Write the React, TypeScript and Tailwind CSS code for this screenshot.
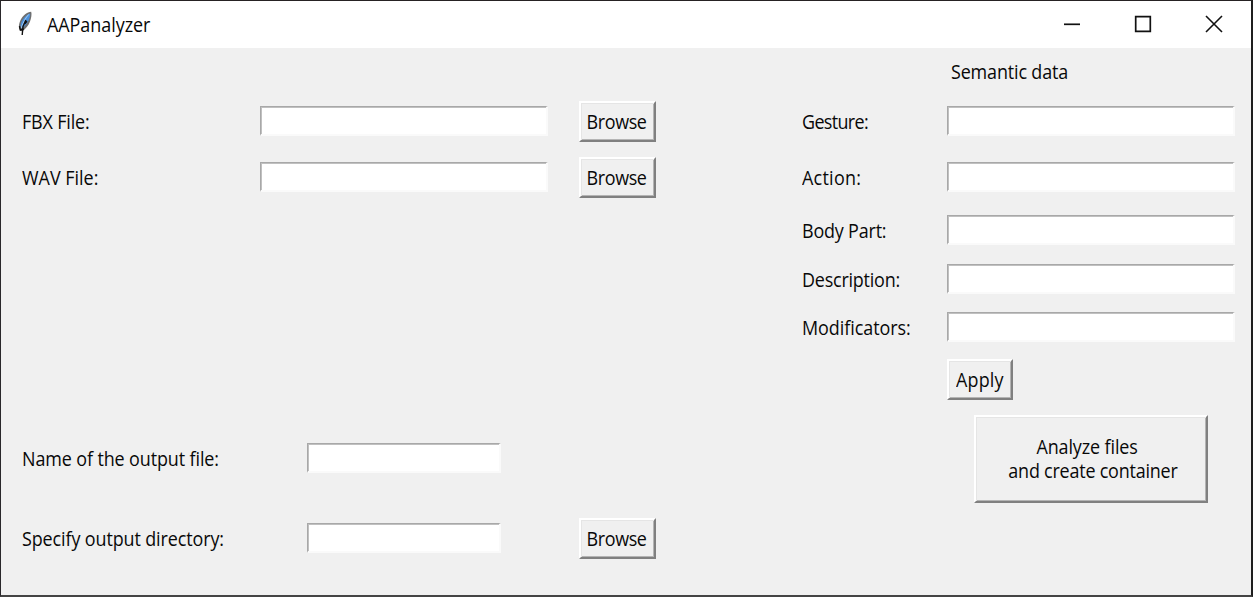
import React from "react";

interface LabelProps {
  children: React.ReactNode;
  origin?: string;
  className?: string;
}

function Label({ children, origin = "origin-left", className = "" }: LabelProps) {
  return <span className={`inline-block scale-x-[0.92] whitespace-pre leading-6 ${origin} ${className}`}>{children}</span>;
}

function Entry({ className = "" }: { className?: string }) {
  return (
    <input
      type="text"
      className={`mb-[2px] block h-[30px] shrink-0 rounded-none border-t border-r-2 border-b-2 border-l border-t-[#a8a8a8] border-r-[#fafafa] border-b-[#fafafa] border-l-[#a8a8a8] bg-white px-1 shadow-[inset_1px_1px_0_#c0c0c0] outline-none ${className}`}
    />
  );
}

function Button({ children, className = "" }: { children: React.ReactNode; className?: string }) {
  return (
    <button
      className={`flex shrink-0 items-center justify-center border-2 border-t-white border-r-[#808080] border-b-[#808080] border-l-white bg-[#f0f0f0] shadow-[inset_1px_1px_0_#e5e5e5,inset_-1px_-1px_0_#b4b4b4] ${className}`}
    >
      {children}
    </button>
  );
}

interface FileRowProps {
  label: string;
  entry: string;
  browse?: boolean;
  className?: string;
  tracking: string;
}

function FileRow({ label, entry, browse = false, className = "", tracking }: FileRowProps) {
  return (
    <div className={`flex h-[41px] items-center ${className}`}>
      <div className="w-0 grow">
        <Label className={tracking}>{label}</Label>
      </div>
      <Entry className={entry} />
      {browse && (
        <Button className="h-[41px] w-[77px] pr-[2px]">
          <Label origin="origin-center" className="tracking-[-0.42px]">Browse</Label>
        </Button>
      )}
    </div>
  );
}

function FieldRow({ label, className, tracking }: { label: string; className: string; tracking: string }) {
  return (
    <div className={`flex h-[32px] items-center ${className}`}>
      <div className="w-[145px] shrink-0 pb-px">
        <Label className={tracking}>{label}</Label>
      </div>
      <Entry className="w-[288px]" />
    </div>
  );
}

function Feather() {
  return (
    <svg width="17" height="26" viewBox="0 0 17 26">
      <path d="M15.2 0.8C11 1.2 6.8 4.6 4.7 8.8C2.8 12.8 2.2 17 4 19.2L6.4 20.4C9.6 18 12.6 14.7 14 10.6C15.2 7.3 16 3.2 15.2 0.8Z" fill="#6f6f6f" />
      <path d="M14 2.4C11 3.2 7.6 6.8 5.8 10.3C4.4 13.2 4.2 16.4 5.4 17.5C8.4 15.7 11.4 12.7 12.6 9.5C13.5 7 14.6 4 14 2.4Z" fill="#4a90dc" />
      <path d="M12.8 3.4C9.6 6.5 7 11.8 5.2 17" fill="none" stroke="#a9cef0" strokeWidth="1" />
      <path d="M9.9 9L7 15.5L6.2 24M3.5 15.2L4.4 19L7.8 18M11 10.2L8.8 12.8" fill="none" stroke="#111111" strokeWidth="1.4" />
    </svg>
  );
}

export default function App() {
  return (
    <div className="flex h-[597px] w-[1253px] flex-col overflow-hidden border-t border-r-2 border-b-2 border-l border-t-[#262223] border-r-[#1f1f1f] border-b-[#444444] border-l-[#29272a] bg-[#f0f0f0] font-['Open_Sans','Noto_Sans',sans-serif] text-[19.5px] text-[#080808]">
      <header className="flex h-[47px] shrink-0 items-center bg-white pb-[2px]">
        <div className="ml-[15px]"><Feather /></div>
        <Label className="mt-[2px] ml-[14px] tracking-[-0.04px]">AAPanalyzer</Label>
        <div className="mr-[28px] ml-auto flex items-center gap-[53px]">
          <svg width="18" height="18" viewBox="0 0 18 18"><path d="M1 9.3H17" stroke="#111" strokeWidth="1.7" /></svg>
          <svg width="18" height="18" viewBox="0 0 18 18"><path d="M1.7 1.7H16.3V16.3H1.7Z" fill="none" stroke="#111" strokeWidth="1.7" /></svg>
          <svg width="18" height="18" viewBox="0 0 18 18"><path d="M1 1L17 17M17 1L1 17" stroke="#111" strokeWidth="1.6" /></svg>
        </div>
      </header>
      <main className="flex flex-1">
        <section className="w-[655px] shrink-0 pt-[53px] pl-[21px]">
          <FileRow label="FBX File:" entry="w-[288px] mr-[31px]" browse tracking="tracking-[-0.17px]" />
          <FileRow label="WAV File:" entry="w-[288px] mr-[31px]" browse className="mt-[15px]" tracking="tracking-[0px]" />
          <FileRow label="Name of the output file:" entry="w-[194px] mr-[155px]" className="mt-[240px]" tracking="tracking-[-0.12px]" />
          <FileRow label="Specify output directory:" entry="w-[194px] mr-[78px]" browse className="mt-[39px]" tracking="tracking-[-0.12px]" />
        </section>
        <section className="ml-[145px] pt-[9px] pl-px">
          <div className="h-[24px] pl-[149px]">
            <Label className="tracking-[-0.16px]">Semantic data</Label>
          </div>
          <FieldRow label="Gesture:" className="mt-[25px]" tracking="tracking-[-0.7px]" />
          <FieldRow label="Action:" className="mt-[24px]" tracking="tracking-[0.28px]" />
          <FieldRow label="Body Part:" className="mt-[21px]" tracking="tracking-[-0.2px]" />
          <FieldRow label="Description:" className="mt-[17px]" tracking="tracking-[-0.23px]" />
          <FieldRow label="Modificators:" className="mt-[16px]" tracking="tracking-[-0.05px]" />
          <Button className="mt-[15px] ml-[145px] h-[41px] w-[66px]">
            <Label origin="origin-center" className="tracking-[0.18px]">Apply</Label>
          </Button>
          <Button className="mt-[15px] ml-[172px] h-[88px] w-[234px] flex-col">
            <Label origin="origin-center" className="mr-[8px] tracking-[-0.11px]">Analyze files</Label>
            <Label origin="origin-center" className="ml-[3px] tracking-[-0.23px]">and create container</Label>
          </Button>
        </section>
      </main>
    </div>
  );
}
